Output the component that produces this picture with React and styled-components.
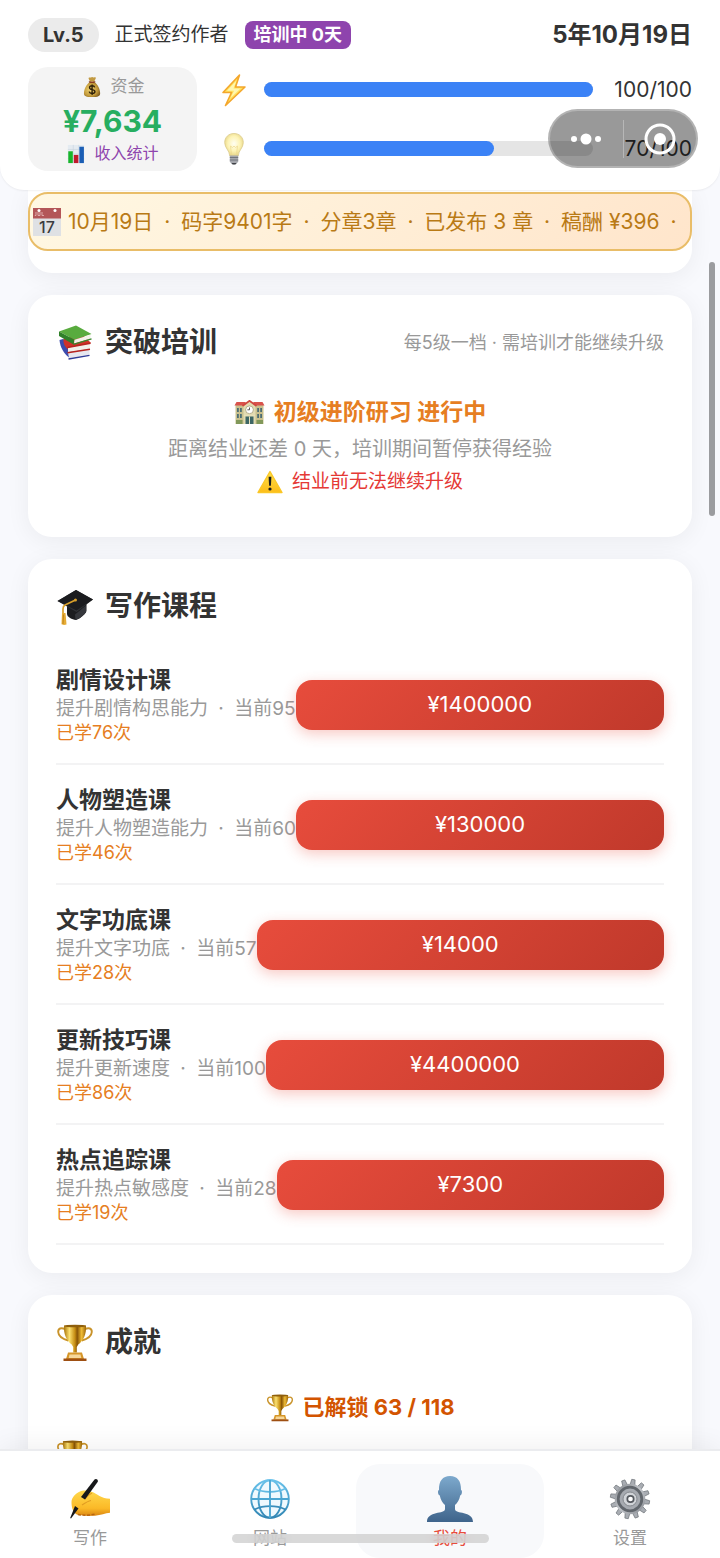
import React from "react";
import styled, { createGlobalStyle, css } from "styled-components";

const Global = createGlobalStyle`
  * { box-sizing: border-box; }
  body {
    margin: 0;
    background: #f8f9fd;
    color: #333;
    font-family: Inter, "Noto Sans CJK SC", sans-serif;
    line-height: 1.4;
  }
  button { font-family: inherit; line-height: inherit; border: 0; cursor: pointer; }
  h2, h3, p, ul { margin: 0; padding: 0; }
  ul { list-style: none; }
`;

/* ---------- drawings ---------- */

const Svg = styled.svg`
  display: block;
  flex: none;
  width: ${(p) => p.$w}px;
  height: ${(p) => p.$h || p.$w}px;
`;

const MoneyBag = ({ size }) => (
  <Svg $w={size} viewBox="0 0 24 24" aria-hidden="true">
    <defs>
      <radialGradient id="bag" cx=".4" cy=".5" r=".65">
        <stop offset="0" stopColor="#f1d573" />
        <stop offset=".65" stopColor="#c39a3b" />
        <stop offset="1" stopColor="#7f5b1c" />
      </radialGradient>
    </defs>
    <path d="M8.4 1.8c1.1-.8 1.8.5 2.8-.3 1-.9 1.7 0 2.6.1 1.1.1 1.8-.5 2.3.2.4.7-1.3 2.7-1.8 4.6H9.9C9.6 4.7 7.6 2.6 8.4 1.8z" fill="#c29a42" />
    <path d="M9.6 6.5h5c3.7 2.5 6.3 8 6.3 12.200 0 3.300-2.500 4.300-8.800 4.300S3.200 22 3.200 18.700c0-4.200 2.700-9.700 6.400-12.200z" fill="url(#bag)" />
    <path d="M9.200 6.400c2 .8 3.900.8 5.800 0" stroke="#8b3d20" strokeWidth="1.500" fill="none" strokeLinecap="round" />
    <path d="M15 12.400c-.4-1.200-1.500-1.700-2.900-1.700-1.600 0-2.800.8-2.800 2 0 2.900 5.900 1.300 5.900 4.300 0 1.300-1.300 2.100-3.100 2.100-1.700 0-2.900-.7-3.200-2M12.100 9.300v11.300" stroke="#2e2008" strokeWidth="1.500" fill="none" />
  </Svg>
);

const BarChart = ({ size }) => (
  <Svg $w={size} viewBox="0 0 20 22" aria-hidden="true">
    <path d="M1 1h18v20H1z" fill="#e4ebf1" />
    <path d="M1 6h18M1 11h18M1 16h18M7 1v20M13 1v20" stroke="#c6d3dd" strokeWidth=".6" />
    <path d="M1.500 8h5v13h-5z" fill="#17b52b" />
    <path d="M7.600 12h5v9h-5z" fill="#c01a2c" />
    <path d="M13.700 3h5v18h-5z" fill="#1b5eb4" />
  </Svg>
);

const Bolt = () => (
  <Svg $w={30} $h={34} viewBox="0 0 30 34" aria-hidden="true">
    <path d="M20.500 2 4 19.500h8.500L6.500 32.500 26 14H16.500z" fill="#ffe35e" stroke="#f4a72c" strokeWidth="1.600" strokeLinejoin="round" />
    <path d="M17.500 7.500 8 17.800h7L11.500 25 21.500 15.500h-7z" fill="#fff6b0" />
  </Svg>
);

const Bulb = () => (
  <Svg $w={30} $h={34} viewBox="0 0 30 34" aria-hidden="true">
    <defs>
      <radialGradient id="glass" cx=".5" cy=".45" r=".55">
        <stop offset="0" stopColor="#fffef2" />
        <stop offset=".6" stopColor="#fdf3b4" />
        <stop offset="1" stopColor="#e6d487" />
      </radialGradient>
    </defs>
    <path d="M15 1.500c5.600 0 9.300 4 9.300 9 0 5.600-4.700 7.600-5.100 13.500h-8.400C10.400 18.100 5.700 16.100 5.700 10.500c0-5 3.700-9 9.300-9z" fill="url(#glass)" stroke="#dccb8b" strokeWidth=".8" />
    <path d="M12.500 23 11.500 14l2 1.500 1.500-1.500 1.500 1.500 2-1.500-1 9" fill="none" stroke="#ecd88d" strokeWidth=".7" />
    <path d="M10.800 23.500h8.400v6.300l-2.300 2.500h-3.800l-2.300-2.500z" fill="#a5a7ad" />
    <path d="M10.800 25.500h8.400M10.800 28h8.400" stroke="#6c6f76" strokeWidth=".9" />
    <path d="M12.500 31h5l-1.200 1.500h-2.600z" fill="#3f4146" />
  </Svg>
);

const Calendar = () => (
  <Svg $w={30} viewBox="0 0 30 30" aria-hidden="true">
    <path d="M1 1h28v28H1z" fill="#dfe1e4" />
    <path d="M1 1h28v10.500H1z" fill="#b35658" />
    <circle cx="7" cy="3.500" r="1.500" fill="#fff" />
    <circle cx="23" cy="3.500" r="1.500" fill="#fff" />
    <path d="M4 5v3.500H2.800M6 5v3.500h2V5M10 5v3.500h2" stroke="#e9bdbd" strokeWidth=".8" fill="none" />
    <text x="15" y="25.500" textAnchor="middle" fontSize="16" fontWeight="500" fill="#3b3b3e">17</text>
  </Svg>
);

const Books = () => (
  <Svg $w={38} viewBox="0 0 38 38" aria-hidden="true">
    <path d="M3.500 16 7 15l26 12v1L13 33.500C8 30 4 23 3.500 16z" fill="#3c4cae" />
    <path d="M12 28.500 33.500 25v5.500L13 34z" fill="#e6e7ef" />
    <path d="m12.500 35 21-3.700" stroke="#2f3c97" strokeWidth="1.300" />
    <path d="M7.500 15 26 10l8.500 8.500v1L12 25.500C8.500 23 7 19 7.500 15z" fill="#cf3229" />
    <path d="m12 23.500 22-4V25l-22 3.300z" fill="#f3f0ea" />
    <path d="m11.500 23.500 23-4.300M11.500 28.800 34 25.200" stroke="#b8241f" strokeWidth="1.500" />
    <path d="M3 7.500 20 1.500 35.500 10 18.500 15.800z" fill="#58ab3e" />
    <path d="M3 7.500V12l14.500 8.500 1-4.700z" fill="#2f8029" />
    <path d="m18.500 15.800 16-5v4L18 19.500z" fill="#f2f1e8" />
    <path d="m17.500 20.300 18-5.500" stroke="#38872f" strokeWidth="1.300" />
  </Svg>
);

const School = () => (
  <Svg $w={31} $h={26} viewBox="0 0 31 26" aria-hidden="true">
    <path d="M1.500 5h28v19h-28z" fill="#c9c08e" />
    <path d="M.5 5.500 2.500 2h9l1 3.500zM30.500 5.500 28.500 2h-9l-1 3.500z" fill="#d9534c" />
    <path d="M9.500 5.500 15.500 1l6 4.500V24h-12z" fill="#e2dbb2" />
    <path d="M8.500 6 15.500.8l7 5.200" stroke="#cf463f" strokeWidth="1.700" fill="none" />
    <circle cx="15.500" cy="9.800" r="3.900" fill="#fff" stroke="#9d946c" strokeWidth=".7" />
    <path d="M15.500 7.500v2.300H13.400" stroke="#333" strokeWidth=".8" fill="none" />
    <path d="M3 8h1.800v4H3zm3 0h1.800v4H6zm17.200 0H25v4h-1.800zm3 0H28v4h-1.800zM3 14h1.800v4H3zm3 0h1.800v4H6zm17.200 0H25v4h-1.800zm3 0H28v4h-1.800z" fill="#4c6d74" />
    <path d="M11.500 16.500h8V24h-8z" fill="#3d6665" />
    <path d="M15.500 16.500V24M10 15.500h11" stroke="#e7e0b9" strokeWidth="1" />
    <path d="M2 20h6.500v4H2zm20.500 0H29v4h-6.500z" fill="#81985a" />
  </Svg>
);

const Warning = () => (
  <Svg $w={26} $h={24} viewBox="0 0 26 24" aria-hidden="true">
    <defs>
      <linearGradient id="warn" x1="0" y1="0" x2="0" y2="1">
        <stop offset="0" stopColor="#ffe14a" />
        <stop offset="1" stopColor="#fcbc18" />
      </linearGradient>
    </defs>
    <path d="M13 1.500 25 22.500H1z" fill="url(#warn)" stroke="#fbc727" strokeWidth="1.400" strokeLinejoin="round" />
    <path d="M11.600 6.800h2.800l-.5 9h-1.800z" fill="#1d1d1d" />
    <circle cx="13" cy="19" r="1.600" fill="#1d1d1d" />
  </Svg>
);

const GradCap = () => (
  <Svg $w={38} viewBox="0 0 38 38" aria-hidden="true">
    <path d="M11 18v8c0 3 5 5.500 9 6 4.500-1.500 9.500-6 10.500-9V15z" fill="#1c1d20" />
    <path d="M19.500 32c4.500-1.500 9.500-5.500 10.500-8.500v-6l-11 9z" fill="#35373c" />
    <path d="M1.500 13 20 2l17 9.500L20.500 24z" fill="#303236" />
    <path d="M1.500 13 20 2l17 9.500-16.500 11z" fill="#1b1c1f" />
    <path d="m19.500 12-10.500 5c-1.500.8-2 2-2 4v5" stroke="#d9a02b" strokeWidth="1.700" fill="none" />
    <path d="M6 25h3.500l1 11.500L8 37l-2.500-.8z" fill="#e6ac35" />
    <path d="M7.500 26.500 7 36" stroke="#b77a17" strokeWidth=".8" />
    <circle cx="19.500" cy="12" r="1.500" fill="#d9a02b" />
  </Svg>
);

const Trophy = ({ size }) => (
  <Svg $w={size} viewBox="0 0 38 38" aria-hidden="true">
    <defs>
      <linearGradient id="gold">
        <stop offset="0" stopColor="#a97409" />
        <stop offset=".25" stopColor="#fbe070" />
        <stop offset=".5" stopColor="#c58c12" />
        <stop offset=".6" stopColor="#875406" />
        <stop offset=".8" stopColor="#f0bd36" />
        <stop offset="1" stopColor="#9a6408" />
      </linearGradient>
    </defs>
    <path d="M9.500 5.500C5 3 2 4.500 2.200 8c.2 3.700 4.500 7 10 8.500M28.500 5.500C33 3 36 4.500 35.800 8c-.2 3.700-4.500 7-10 8.500" stroke="#c9932a" strokeWidth="1.900" fill="none" />
    <path d="M8 1.500h22c.6 8.500-2.500 15-7.700 19L20.800 23v5.500h-3.600V23l-1.500-2.500C10.500 16.500 7.400 10 8 1.500z" fill="url(#gold)" />
    <ellipse cx="19" cy="2" rx="11" ry="1.300" fill="#8f5f0c" />
    <path d="M12 28.500h14l2 6.500H10z" fill="#d69629" />
    <path d="M13.500 30.500h11l.8 3.500H12.700z" fill="#f6d79a" />
    <path d="M7.500 34.500h23V37h-23z" fill="#9e4f12" />
  </Svg>
);

const WritingHand = () => (
  <Svg $w={42} viewBox="0 0 42 42" aria-hidden="true">
    <defs>
      <linearGradient id="hand" x1="0" y1="0" x2="0" y2="1">
        <stop offset="0" stopColor="#ffd94d" />
        <stop offset=".7" stopColor="#fbb927" />
        <stop offset="1" stopColor="#d98512" />
      </linearGradient>
    </defs>
    <path d="M2.500 24c0-5 5.500-10.500 12-11.500 3-.4 6 .3 9 1.500 4 1.600 9 6.800 17.500 6.800v14c-5 .3-9 2.500-15 3-6 .3-14 .3-17.500-1C4 35 2.500 29.500 2.500 24z" fill="url(#hand)" />
    <path d="M13 27c3-2 6-4 9-4.500M23 15c-3 1.500-5 3-7 6" stroke="#e29d22" strokeWidth="1.200" fill="none" />
    <path d="M9 36.500c3 .8 13 1 17-.3" stroke="#b9650f" strokeWidth="1.500" strokeDasharray="3 1.500" fill="none" />
    <path d="M25.500 1.500c1.500-1.500 4 .2 3.300 2.200L16 21.500 12 19z" fill="#17181a" />
    <path d="m6 28 3.500 2.500L2 40.500 1.200 40z" fill="#17181a" />
  </Svg>
);

const Globe = () => (
  <Svg $w={42} viewBox="0 0 42 42" aria-hidden="true">
    <defs>
      <linearGradient id="globe" x1="0" y1="0" x2="0" y2="1">
        <stop offset="0" stopColor="#68c1ea" />
        <stop offset="1" stopColor="#3286b4" />
      </linearGradient>
    </defs>
    <circle cx="21" cy="21" r="18.500" fill="#eff9fe" />
    <g stroke="url(#globe)" fill="none" strokeWidth="1.900">
      <circle cx="21" cy="21" r="18.800" />
      <ellipse cx="21" cy="21" rx="11.500" ry="18.800" />
      <path d="M5.500 10.500c9 4.500 22 4.500 31 0M5.500 31.500c9-4.500 22-4.500 31 0" />
    </g>
    <path d="M21 2v38" stroke="#4ba6d2" strokeWidth="1.900" />
    <path d="M2 21h38" stroke="#4ba6d2" strokeWidth="1.900" />
  </Svg>
);

const Person = () => (
  <Svg $w={46} viewBox="0 0 46 46" aria-hidden="true">
    <defs>
      <linearGradient id="bust" x1="0" y1="0" x2="0" y2="1">
        <stop offset="0" stopColor="#7da9cd" />
        <stop offset="1" stopColor="#3f648b" />
      </linearGradient>
    </defs>
    <path d="M23 0c7.500 0 11.200 5 11 14 1.500 0 1.300 5-.8 5.500-.8 4-2.600 7.500-5.200 9.500v4c0 5.500 18 1.500 18 13H0c0-11.500 18-7.500 18-13v-4c-2.600-2-4.400-5.500-5.200-9.500-2.100-.5-2.300-5.500-.8-5.500C11.800 5 15.500 0 23 0z" fill="url(#bust)" />
  </Svg>
);

const teeth = Array.from({ length: 12 }, (_, i) => i * 30 + 10);

const Gear = () => (
  <Svg $w={42} viewBox="0 0 42 42" aria-hidden="true">
    <defs>
      <linearGradient id="steel" x1="0" y1="0" x2="1" y2="1">
        <stop offset="0" stopColor="#83878c" />
        <stop offset=".5" stopColor="#c1c4c9" />
        <stop offset="1" stopColor="#85898f" />
      </linearGradient>
    </defs>
    {teeth.map((a) => (
      <path key={a} d="M18.600 7 19.300 1.300h3.400L23.400 7z" fill="#a9adb3" stroke="#6f7479" strokeWidth=".7" transform={`rotate(${a} 21 21)`} />
    ))}
    <circle cx="21" cy="21" r="15.300" fill="url(#steel)" />
    <circle cx="21" cy="21" r="11.800" fill="#a6aab0" stroke="#62676d" strokeWidth="2.800" />
    <circle cx="21" cy="21" r="7" fill="#d1d4d8" stroke="#84888e" />
    <circle cx="21.500" cy="21" r="3.200" fill="#fff" stroke="#55595f" strokeWidth="1.700" />
  </Svg>
);

const CapsuleDots = () => (
  <Svg $w={32} $h={16} viewBox="0 0 32 16" aria-hidden="true">
    <g fill="#fff">
      <circle cx="4" cy="8" r="3" />
      <circle cx="16" cy="8" r="5.500" />
      <circle cx="28" cy="8" r="3" />
    </g>
  </Svg>
);

const CapsuleTarget = () => (
  <Svg $w={32} viewBox="0 0 32 32" aria-hidden="true">
    <circle cx="16" cy="16" r="14" fill="none" stroke="#fff" strokeWidth="3" />
    <circle cx="16" cy="16" r="6" fill="#fff" />
  </Svg>
);

/* ---------- shell and header ---------- */

const Shell = styled.div`
  position: relative;
  display: flex;
  flex-direction: column;
  height: 100vh;
  overflow: hidden;
`;

const Header = styled.header`
  position: relative;
  z-index: 1;
  flex: none;
  display: flex;
  flex-direction: column;
  gap: 15px;
  padding: 18px 28px 19px;
  background: #fff;
  border-radius: 0 0 24px 24px;
  box-shadow: 0 1px 2px rgba(0, 0, 0, 0.06);
`;

const ProfileRow = styled.div`
  display: flex;
  align-items: center;
  gap: 16px;
  height: 34px;
  font-size: 19px;
  white-space: nowrap;
`;

const Level = styled.span`
  padding: 0 15px;
  border-radius: 17px;
  background: #ebebeb;
  font-size: 20px;
  font-weight: 700;
  line-height: 34px;
`;

const Training = styled.span`
  padding: 0 9px;
  border-radius: 8px;
  background: #8e44ad;
  color: #fff;
  font-size: 18px;
  font-weight: 700;
  line-height: 28px;
`;

const Today = styled.time`
  margin-left: auto;
  font-size: 24px;
  font-weight: 700;
`;

const StatsRow = styled.div`
  display: flex;
  gap: 22px;
`;

const Funds = styled.div`
  display: flex;
  flex-direction: column;
  align-items: center;
  width: 169px;
  padding: 4px 0;
  border-radius: 20px;
  background: #f4f4f4;
`;

const FundsLabel = styled.div`
  display: flex;
  align-items: center;
  gap: 8px;
  height: 31px;
  color: #999;
  font-size: 17px;
`;

const FundsValue = styled.strong`
  color: #27ae60;
  font-size: 30px;
  line-height: 38px;
`;

const IncomeButton = styled.button`
  display: flex;
  align-items: center;
  gap: 8px;
  height: 27px;
  padding: 0;
  background: none;
  color: #8e44ad;
  font-size: 16px;
`;

const Meters = styled.div`
  flex: 1;
  display: flex;
  flex-direction: column;
  gap: 14px;
`;

const Meter = styled.div`
  display: flex;
  align-items: center;
  gap: 15px;
  height: 45px;
`;

const Track = styled.div`
  flex: 1;
  height: 15px;
  border-radius: 8px;
  background: #e5e5e5;
`;

const Fill = styled.div`
  height: 100%;
  border-radius: 8px;
  background: #3b82f6;
`;

const MeterValue = styled.span`
  width: 84px;
  font-size: 21px;
  text-align: right;
`;

const Capsule = styled.div`
  position: absolute;
  z-index: 2;
  top: 109px;
  right: 22px;
  display: flex;
  align-items: center;
  width: 150px;
  height: 59px;
  border: 2px solid rgba(255, 255, 255, 0.25);
  border-radius: 30px;
  background: rgba(0, 0, 0, 0.4);
`;

const CapsuleButton = styled.button`
  flex: 1;
  display: flex;
  justify-content: center;
  padding: 0;
  background: none;
  & + & { border-left: 1px solid rgba(255, 255, 255, 0.3); padding: 3px 0; }
`;

/* ---------- content ---------- */

const Content = styled.main`
  flex: 1;
  min-height: 0;
  display: flex;
  flex-direction: column;
  gap: 22px;
  padding: 0 28px;
  overflow-y: auto;
  scrollbar-width: none;
`;

const surface = css`
  flex: none;
  background: #fff;
  box-shadow: 0 4px 24px rgba(0, 0, 0, 0.06);
`;

const TickerCard = styled.section`
  ${surface}
  padding: 2px 0 22px;
  border-radius: 0 0 24px 24px;
`;

const Ticker = styled.div`
  display: flex;
  align-items: center;
  gap: 6px;
  height: 59px;
  padding-left: 2px;
  overflow: hidden;
  border: 2px solid #e9bd68;
  border-radius: 20px;
  background: linear-gradient(135deg, #fff8e3, #ffe5cb);
  color: #b97a15;
  font-size: 21px;
  white-space: nowrap;
`;

const Dot = styled.span`
  margin: 0 5px;
`;

const Card = styled.section`
  ${surface}
  padding: 28px;
  border-radius: 24px;
`;

const CardHead = styled.div`
  display: flex;
  align-items: center;
  justify-content: space-between;
  height: 40px;
`;

const CardTitle = styled.h2`
  display: flex;
  align-items: center;
  gap: 11px;
  font-size: 28px;
  font-weight: 700;
`;

const Hint = styled.span`
  color: #999;
  font-size: 18px;
`;

const TrainingBox = styled.div`
  padding: 31px 0 12px;
`;

const tones = { orange: "#e67e22", grey: "#999", red: "#e53935", amber: "#d35400" };

const CenterLine = styled.p`
  display: flex;
  align-items: center;
  justify-content: center;
  gap: 9px;
  height: ${(p) => p.$h}px;
  color: ${(p) => tones[p.$tone]};
  font-size: ${(p) => p.$size}px;
  font-weight: ${(p) => (p.$bold ? 700 : 400)};
`;

const CourseList = styled.ul`
  padding-top: 18px;
`;

const Course = styled.li`
  display: flex;
  align-items: center;
  padding: 20px 0 19px;
  border-bottom: 2px solid #f3f3f4;
`;

const CourseInfo = styled.div`
  flex: none;
  white-space: nowrap;
`;

const CourseName = styled.h3`
  font-size: 23px;
  font-weight: 700;
  line-height: 30px;
`;

const CourseDesc = styled.p`
  color: #999;
  font-size: 19px;
  line-height: 27px;
`;

const CourseCount = styled.p`
  color: #e67e22;
  font-size: 18px;
  line-height: 22px;
`;

const BuyButton = styled.button`
  flex: 1;
  height: 50px;
  border-radius: 16px;
  background: linear-gradient(135deg, #e74c3c, #c0392b);
  box-shadow: 0 4px 14px rgba(231, 76, 60, 0.3);
  color: #fff;
  font-size: 22px;
`;

const Unlocked = styled.div`
  padding: 26px 0 14px;
`;

/* ---------- overlays and navigation ---------- */

const ScrollThumb = styled.div`
  position: absolute;
  top: 262px;
  right: 5px;
  width: 6px;
  height: 254px;
  border-radius: 3px;
  background: #9b9c9f;
`;

const Nav = styled.nav`
  position: relative;
  flex: none;
  display: grid;
  grid-template-columns: repeat(4, minmax(0, 1fr));
  height: 109px;
  padding-top: 13px;
  border-top: 2px solid #ebecef;
  background: #fff;
  box-shadow: 0 -4px 24px rgba(0, 0, 0, 0.06);
`;

const Tab = styled.button`
  display: flex;
  flex-direction: column;
  align-items: center;
  padding: 0;
  border-radius: 24px;
  margin: ${(p) => (p.$active ? "0 -4px" : "0")};
  background: ${(p) => (p.$active ? "#f8f9fb" : "none")};
  color: ${(p) => (p.$active ? "#e74c3c" : "#999")};
  font-size: 17px;
`;

const TabIcon = styled.span`
  display: flex;
  align-items: center;
  height: 62px;
  padding-top: 8px;
`;

const TabLabel = styled.span`
  line-height: 24px;
`;

const HomeBar = styled.div`
  position: absolute;
  left: 50%;
  bottom: 15px;
  width: 257px;
  height: 9px;
  margin-left: -128px;
  border-radius: 5px;
  background: rgba(208, 208, 208, 0.8);
  backdrop-filter: blur(6px);
`;

const meters = [
  { name: "体力", icon: <Bolt />, value: 100 },
  { name: "灵感", icon: <Bulb />, value: 70 },
];

const courses = [
  ["剧情设计课", "提升剧情构思能力", 95, 76, 1400000],
  ["人物塑造课", "提升人物塑造能力", 60, 46, 130000],
  ["文字功底课", "提升文字功底", 57, 28, 14000],
  ["更新技巧课", "提升更新速度", 100, 86, 4400000],
  ["热点追踪课", "提升热点敏感度", 28, 19, 7300],
];

const news = ["10月19日", "码字9401字", "分章3章", "已发布 3 章", "稿酬 ¥396", "日"];

const tabs = [
  ["写作", <WritingHand />],
  ["网站", <Globe />],
  ["我的", <Person />],
  ["设置", <Gear />],
];

export default function App() {
  return (
    <Shell>
      <Global />
      <Header>
        <ProfileRow>
          <Level>Lv.5</Level>
          <span>正式签约作者</span>
          <Training>培训中 0天</Training>
          <Today>5年10月19日</Today>
        </ProfileRow>
        <StatsRow>
          <Funds>
            <FundsLabel><MoneyBag size={22} />资金</FundsLabel>
            <FundsValue>¥7,634</FundsValue>
            <IncomeButton><BarChart size={20} />收入统计</IncomeButton>
          </Funds>
          <Meters>
            {meters.map((m) => (
              <Meter key={m.name}>
                {m.icon}
                <Track role="meter" aria-label={m.name} aria-valuenow={m.value} aria-valuemin={0} aria-valuemax={100}>
                  <Fill style={{ width: `${m.value}%` }} />
                </Track>
                <MeterValue>{m.value}/100</MeterValue>
              </Meter>
            ))}
          </Meters>
        </StatsRow>
      </Header>

      <Content>
        <TickerCard>
          <Ticker>
            <Calendar />
            <span>
              {news.map((item, i) => (
                <React.Fragment key={item}>
                  {i > 0 && <Dot> · </Dot>}
                  {item}
                </React.Fragment>
              ))}
            </span>
          </Ticker>
        </TickerCard>

        <Card>
          <CardHead>
            <CardTitle><Books />突破培训</CardTitle>
            <Hint>每5级一档 · 需培训才能继续升级</Hint>
          </CardHead>
          <TrainingBox>
            <CenterLine $h={37} $size={23} $tone="orange" $bold><School />初级进阶研习 进行中</CenterLine>
            <CenterLine $h={36} $size={20} $tone="grey">距离结业还差 0 天，培训期间暂停获得经验</CenterLine>
            <CenterLine $h={30} $size={19} $tone="red"><Warning />结业前无法继续升级</CenterLine>
          </TrainingBox>
        </Card>

        <Card>
          <CardHead>
            <CardTitle><GradCap />写作课程</CardTitle>
          </CardHead>
          <CourseList>
            {courses.map(([name, desc, level, count, price]) => (
              <Course key={name}>
                <CourseInfo>
                  <CourseName>{name}</CourseName>
                  <CourseDesc>{desc}<Dot> · </Dot>当前{level}</CourseDesc>
                  <CourseCount>已学{count}次</CourseCount>
                </CourseInfo>
                <BuyButton aria-label={`${name} ¥${price}`}>¥{price}</BuyButton>
              </Course>
            ))}
          </CourseList>
        </Card>

        <Card>
          <CardHead>
            <CardTitle><Trophy size={38} />成就</CardTitle>
          </CardHead>
          <Unlocked>
            <CenterLine $h={37} $size={22} $tone="amber" $bold><Trophy size={28} />已解锁 63 / 118</CenterLine>
          </Unlocked>
          <Trophy size={33} />
        </Card>
      </Content>

      <Nav>
        {tabs.map(([label, icon]) => (
          <Tab key={label} $active={label === "我的"}>
            <TabIcon>{icon}</TabIcon>
            <TabLabel>{label}</TabLabel>
          </Tab>
        ))}
        <HomeBar />
      </Nav>

      <Capsule>
        <CapsuleButton aria-label="更多"><CapsuleDots /></CapsuleButton>
        <CapsuleButton aria-label="关闭"><CapsuleTarget /></CapsuleButton>
      </Capsule>
      <ScrollThumb />
    </Shell>
  );
}
